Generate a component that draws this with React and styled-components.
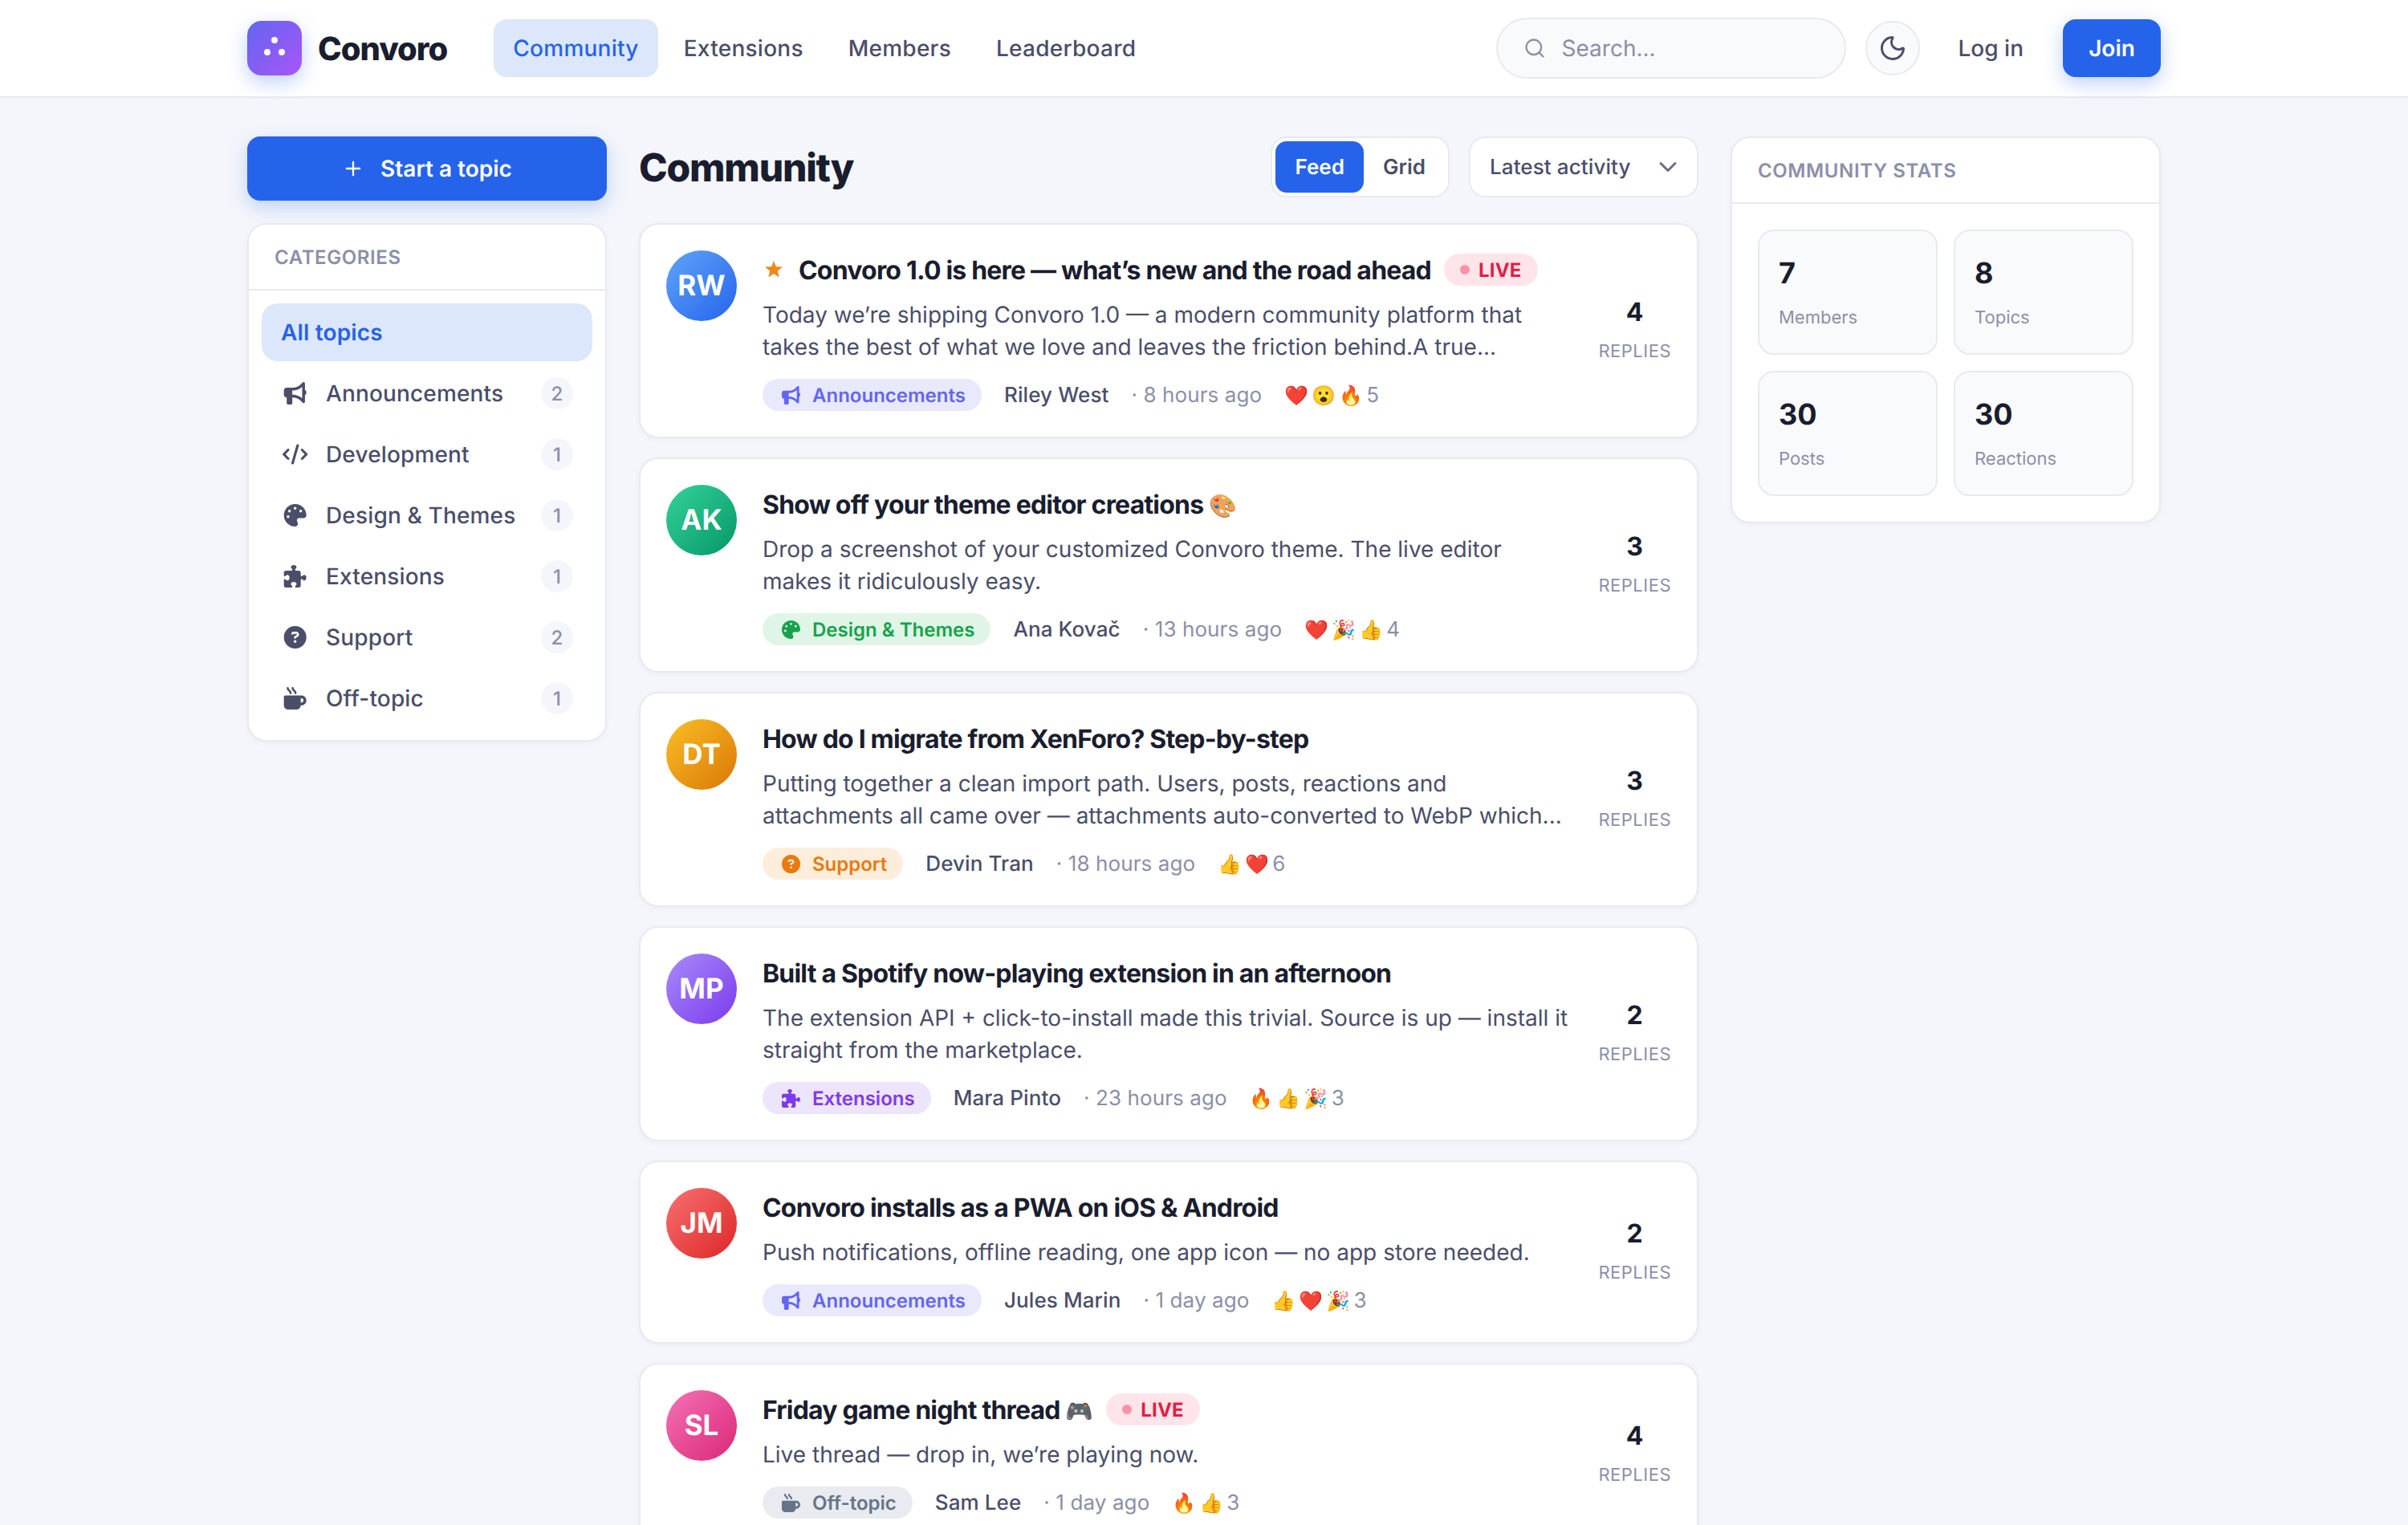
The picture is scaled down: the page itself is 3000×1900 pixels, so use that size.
import React from "react";
import styled, { createGlobalStyle } from "styled-components";
import { Search, Moon, Plus, ChevronDown } from "lucide-react";
import { FaBullhorn, FaCode, FaPalette, FaPuzzlePiece, FaCircleQuestion, FaMugHot } from "react-icons/fa6";

const colors = {
  bg: "#f4f6fb",
  white: "#ffffff",
  border: "#e8eaf1",
  ink: "#1a1d2e",
  body: "#4a4e69",
  muted: "#8b8fa8",
  blue: "#2563eb",
  blueSoft: "#dde7fb",
  tile: "#f9fafc",
};

const GlobalStyle = createGlobalStyle`
  * { box-sizing: border-box; }
  html, body { margin: 0; padding: 0; }
  body {
    background: ${colors.bg};
    color: ${colors.ink};
    font-family: Inter, "Noto Sans", sans-serif;
    text-rendering: geometricPrecision;
    height: 1900px;
    overflow: hidden;
  }
`;

const Header = styled.header`
  height: 122px;
  background: ${colors.white};
  border-bottom: 2px solid ${colors.border};
`;

const HeaderInner = styled.div`
  width: 2384px;
  height: 120px;
  margin: 0 auto;
  display: flex;
  align-items: center;
`;

const Logo = styled.div`
  width: 68px;
  height: 68px;
  border-radius: 18px;
  background: linear-gradient(135deg, #6366f1, #a855f7);
  box-shadow: 0 8px 24px rgba(37, 99, 235, 0.3);
  display: flex;
  align-items: center;
  justify-content: center;
`;

const Brand = styled.div`
  margin-left: 20px;
  margin-right: 58px;
  font-size: 40px;
  font-weight: 800;
  letter-spacing: -1px;
`;

const Nav = styled.nav`
  display: flex;
  gap: 8px;
`;

const NavLink = styled.a`
  height: 72px;
  padding: 0 24px;
  display: flex;
  align-items: center;
  border-radius: 16px;
  font-size: 28px;
  font-weight: 500;
  letter-spacing: 0.25px;
  color: ${(p) => (p.$active ? colors.blue : colors.body)};
  background: ${(p) => (p.$active ? colors.blueSoft : "transparent")};
`;

const HeaderRight = styled.div`
  margin-left: auto;
  display: flex;
  align-items: center;
`;

const SearchBox = styled.div`
  width: 436px;
  height: 76px;
  padding: 0 32px;
  display: flex;
  align-items: center;
  gap: 20px;
  border: 2px solid ${colors.border};
  border-radius: 38px;
  background: ${colors.tile};
  color: ${colors.muted};
  font-size: 28px;
`;

const ThemeButton = styled.button`
  width: 68px;
  height: 68px;
  margin-left: 24px;
  padding: 0;
  display: flex;
  align-items: center;
  justify-content: center;
  border: 2px solid ${colors.border};
  border-radius: 50%;
  background: ${colors.tile};
  color: ${colors.body};
`;

const LogIn = styled.a`
  margin-left: 48px;
  margin-right: 49px;
  font-size: 28px;
  font-weight: 500;
  color: ${colors.body};
`;

const JoinButton = styled.button`
  width: 122px;
  height: 72px;
  border: 0;
  border-radius: 16px;
  background: ${colors.blue};
  color: ${colors.white};
  font: 600 28px Inter, sans-serif;
  text-rendering: geometricPrecision;
  box-shadow: 0 8px 24px rgba(37, 99, 235, 0.3);
`;

const Layout = styled.div`
  width: 2384px;
  margin: 48px auto 0;
  display: grid;
  grid-template-columns: 448px 1320px 536px;
  gap: 40px;
  align-items: start;
`;

const Sidebar = styled.aside`
  display: flex;
  flex-direction: column;
  gap: 28px;
`;

const StartButton = styled.button`
  height: 80px;
  border: 0;
  border-radius: 16px;
  background: ${colors.blue};
  color: ${colors.white};
  font: 600 28px Inter, sans-serif;
  text-rendering: geometricPrecision;
  display: flex;
  align-items: center;
  justify-content: center;
  gap: 20px;
  box-shadow: 0 8px 24px rgba(37, 99, 235, 0.25);
`;

const Panel = styled.section`
  background: ${colors.white};
  border: 2px solid ${colors.border};
  border-radius: 24px;
  box-shadow: 0 2px 8px rgba(26, 29, 46, 0.04);
  overflow: hidden;
`;

const PanelTitle = styled.h3`
  margin: 0;
  height: 82px;
  padding: 0 32px;
  display: flex;
  align-items: center;
  border-bottom: 2px solid ${colors.border};
  font-size: 24px;
  font-weight: 600;
  letter-spacing: 0.6px;
  text-transform: uppercase;
  color: ${colors.muted};
`;

const CategoryList = styled.div`
  padding: 16px;
  display: flex;
  flex-direction: column;
  gap: 4px;
`;

const CategoryRow = styled.a`
  height: 72px;
  padding: 0 24px;
  display: flex;
  align-items: center;
  border-radius: 20px;
  font-size: 28px;
  letter-spacing: 0.15px;
  color: ${(p) => (p.$active ? colors.blue : colors.body)};
  background: ${(p) => (p.$active ? colors.blueSoft : "transparent")};
  font-weight: ${(p) => (p.$active ? 600 : 500)};
`;

const CategoryIcon = styled.span`
  width: 36px;
  margin-right: 20px;
  display: flex;
  justify-content: center;
  font-size: 28px;
  svg {
    height: 1em;
    width: 1.12em;
    flex: none;
  }
`;

const CountBadge = styled.span`
  margin-left: auto;
  min-width: 40px;
  height: 40px;
  padding: 0 12px;
  display: flex;
  align-items: center;
  justify-content: center;
  border-radius: 20px;
  background: ${colors.bg};
  color: ${colors.muted};
  font-size: 24px;
`;

const Main = styled.main`
  min-width: 0;
`;

const MainHead = styled.div`
  height: 76px;
  margin-bottom: 32px;
  display: flex;
  align-items: center;
`;

const PageTitle = styled.h1`
  margin: 0 auto 0 0;
  font-size: 48px;
  font-weight: 800;
  letter-spacing: -1.2px;
`;

const ViewToggle = styled.div`
  height: 76px;
  padding: 4px;
  display: flex;
  border: 2px solid ${colors.border};
  border-radius: 20px;
  background: ${colors.white};
`;

const ToggleButton = styled.button`
  padding: 0 24px;
  border: 0;
  border-radius: 14px;
  font: 600 26px Inter, sans-serif;
  text-rendering: geometricPrecision;
  background: ${(p) => (p.$active ? colors.blue : "transparent")};
  color: ${(p) => (p.$active ? colors.white : colors.body)};
`;

const SortSelect = styled.div`
  width: 286px;
  height: 76px;
  margin-left: 24px;
  padding: 0 18px 0 24px;
  display: flex;
  align-items: center;
  justify-content: space-between;
  border: 2px solid ${colors.border};
  border-radius: 20px;
  background: ${colors.white};
  color: ${colors.body};
  font-size: 26px;
  font-weight: 500;
  letter-spacing: 0.1px;
  svg {
    color: #6b6e82;
  }
`;

const TopicList = styled.div`
  display: flex;
  flex-direction: column;
  gap: 24px;
`;

const TopicCard = styled.article`
  padding: 32px;
  display: flex;
  align-items: stretch;
  gap: 32px;
  background: ${colors.white};
  border: 2px solid ${colors.border};
  border-radius: 24px;
  box-shadow: 0 2px 8px rgba(26, 29, 46, 0.04);
`;

const Avatar = styled.div`
  flex: none;
  width: 88px;
  height: 88px;
  display: flex;
  align-items: center;
  justify-content: center;
  border-radius: 50%;
  background: linear-gradient(135deg, ${(p) => p.$from}, ${(p) => p.$to});
  color: ${colors.white};
  font-size: 35px;
  font-weight: 700;
`;

const TopicBody = styled.div`
  flex: 1;
  min-width: 0;
`;

const TitleRow = styled.div`
  min-height: 48px;
  display: flex;
  align-items: center;
  gap: 16px;
`;

const PinStar = styled.svg`
  flex: none;
  width: 25px;
  height: 24px;
  margin-right: 4px;
  fill: #f08718;
`;

const TopicTitle = styled.h2`
  margin: 0;
  font-size: 32px;
  font-weight: 700;
  letter-spacing: -0.8px;
`;

const TitleEmoji = styled.span`
  font-size: 28px;
  letter-spacing: 0;
`;

const LiveBadge = styled.span`
  height: 40px;
  padding: 0 20px;
  display: flex;
  align-items: center;
  gap: 11px;
  border-radius: 20px;
  background: #ffe4e9;
  color: #e11d48;
  font-size: 24px;
  font-weight: 700;
  letter-spacing: 0.2px;
  &::before {
    content: "";
    width: 12px;
    height: 12px;
    border-radius: 50%;
    background: #fb92a8;
  }
`;

const Snippet = styled.p`
  margin: 12px 0 0;
  font-size: 28px;
  line-height: 40px;
  color: ${colors.body};
`;

const MetaRow = styled.div`
  margin-top: 20px;
  height: 40px;
  display: flex;
  align-items: center;
  font-size: 26px;
  letter-spacing: 0.1px;
`;

const CategoryTag = styled.span`
  height: 40px;
  padding: 0 20px;
  display: flex;
  align-items: center;
  gap: 12px;
  border-radius: 20px;
  background: ${(p) => p.$bg};
  color: ${(p) => p.$color};
  font-size: 24px;
  font-weight: 600;
  letter-spacing: 0;
`;

const TagIcon = styled.span`
  width: 30px;
  display: flex;
  justify-content: center;
  font-size: 23px;
`;

const Author = styled.span`
  margin-left: 28px;
  font-weight: 500;
  color: ${colors.body};
`;

const TimeAgo = styled.span`
  margin-left: 28px;
  color: ${colors.muted};
`;

const Reactions = styled.span`
  margin-left: 26px;
  display: flex;
  align-items: center;
  color: ${colors.muted};
`;

const Emoji = styled.span`
  width: 34px;
  display: flex;
  justify-content: center;
  font-size: 24px;
`;

const ReactionTotal = styled.span`
  margin-left: 2px;
`;

const Replies = styled.div`
  flex: none;
  padding-bottom: 4px;
  display: flex;
  flex-direction: column;
  align-items: center;
  justify-content: center;
  gap: 17px;
`;

const ReplyCount = styled.div`
  font-size: 32px;
  font-weight: 700;
`;

const ReplyLabel = styled.div`
  font-size: 22px;
  letter-spacing: 0.5px;
  color: ${colors.muted};
`;

const StatGrid = styled.div`
  padding: 32px;
  display: grid;
  grid-template-columns: 1fr 1fr;
  gap: 20px;
`;

const StatTile = styled.div`
  height: 156px;
  padding: 28px 24px;
  background: ${colors.tile};
  border: 2px solid ${colors.border};
  border-radius: 20px;
`;

const StatValue = styled.div`
  font-size: 36px;
  font-weight: 700;
  line-height: 48px;
`;

const StatLabel = styled.div`
  margin-top: 19px;
  font-size: 22px;
  color: ${colors.muted};
`;

const categories = [
  { name: "Announcements", count: 2, Icon: FaBullhorn },
  { name: "Development", count: 1, Icon: FaCode },
  { name: "Design & Themes", count: 1, Icon: FaPalette },
  { name: "Extensions", count: 1, Icon: FaPuzzlePiece },
  { name: "Support", count: 2, Icon: FaCircleQuestion },
  { name: "Off-topic", count: 1, Icon: FaMugHot },
];

const tags = {
  announcements: { name: "Announcements", Icon: FaBullhorn, bg: "#e8e9fd", color: "#6366f1" },
  design: { name: "Design & Themes", Icon: FaPalette, bg: "#e0f5e7", color: "#16a34a" },
  support: { name: "Support", Icon: FaCircleQuestion, bg: "#fdeedc", color: "#ea7a0c" },
  extensions: { name: "Extensions", Icon: FaPuzzlePiece, bg: "#ede4fd", color: "#7c3aed" },
  offtopic: { name: "Off-topic", Icon: FaMugHot, bg: "#e9ebf0", color: "#64748b" },
};

const topics = [
  {
    initials: "RW", from: "#60a5fa", to: "#2563eb", pinned: true, live: true,
    title: "Convoro 1.0 is here — what’s new and the road ahead",
    snippet: "Today we’re shipping Convoro 1.0 — a modern community platform that takes the best of what we love and leaves the friction behind.A true...",
    tag: "announcements", author: "Riley West", time: "8 hours ago", reactions: ["❤️", "😮", "🔥"], total: 5, replies: 4,
  },
  {
    initials: "AK", from: "#34d399", to: "#059669",
    title: "Show off your theme editor creations", emoji: "🎨",
    snippet: "Drop a screenshot of your customized Convoro theme. The live editor makes it ridiculously easy.",
    tag: "design", author: "Ana Kovač", time: "13 hours ago", reactions: ["❤️", "🎉", "👍"], total: 4, replies: 3,
  },
  {
    initials: "DT", from: "#fbbf24", to: "#d97706",
    title: "How do I migrate from XenForo? Step-by-step",
    snippet: "Putting together a clean import path. Users, posts, reactions and attachments all came over — attachments auto-converted to WebP which...",
    tag: "support", author: "Devin Tran", time: "18 hours ago", reactions: ["👍", "❤️"], total: 6, replies: 3,
  },
  {
    initials: "MP", from: "#a78bfa", to: "#7c3aed",
    title: "Built a Spotify now-playing extension in an afternoon",
    snippet: "The extension API + click-to-install made this trivial. Source is up — install it straight from the marketplace.",
    tag: "extensions", author: "Mara Pinto", time: "23 hours ago", reactions: ["🔥", "👍", "🎉"], total: 3, replies: 2,
  },
  {
    initials: "JM", from: "#f87171", to: "#dc2626",
    title: "Convoro installs as a PWA on iOS & Android",
    snippet: "Push notifications, offline reading, one app icon — no app store needed.",
    tag: "announcements", author: "Jules Marin", time: "1 day ago", reactions: ["👍", "❤️", "🎉"], total: 3, replies: 2,
  },
  {
    initials: "SL", from: "#f472b6", to: "#db2777", live: true,
    title: "Friday game night thread", emoji: "🎮",
    snippet: "Live thread — drop in, we’re playing now.",
    tag: "offtopic", author: "Sam Lee", time: "1 day ago", reactions: ["🔥", "👍"], total: 3, replies: 4,
  },
];

const stats = [
  { value: 7, label: "Members" },
  { value: 8, label: "Topics" },
  { value: 30, label: "Posts" },
  { value: 30, label: "Reactions" },
];

const Topic = ({ topic }) => {
  const tag = tags[topic.tag];
  return (
    <TopicCard>
      <Avatar $from={topic.from} $to={topic.to}>{topic.initials}</Avatar>
      <TopicBody>
        <TitleRow>
          {topic.pinned && (
            <PinStar viewBox="0 0 25 24">
              <polygon points="14,1 16.88,8.24 25.03,8.6 18.66,13.71 20.8,21.6 14,17.1 7.2,21.6 9.34,13.71 2.97,8.6 11.12,8.24" />
            </PinStar>
          )}
          <TopicTitle>
            {topic.title}
            {topic.emoji && <TitleEmoji> {topic.emoji}</TitleEmoji>}
          </TopicTitle>
          {topic.live && <LiveBadge>LIVE</LiveBadge>}
        </TitleRow>
        <Snippet>{topic.snippet}</Snippet>
        <MetaRow>
          <CategoryTag $bg={tag.bg} $color={tag.color}>
            <TagIcon><tag.Icon /></TagIcon>
            {tag.name}
          </CategoryTag>
          <Author>{topic.author}</Author>
          <TimeAgo>· {topic.time}</TimeAgo>
          <Reactions>
            {topic.reactions.map((r) => <Emoji key={r}>{r}</Emoji>)}
            <ReactionTotal>{topic.total}</ReactionTotal>
          </Reactions>
        </MetaRow>
      </TopicBody>
      <Replies>
        <ReplyCount>{topic.replies}</ReplyCount>
        <ReplyLabel>REPLIES</ReplyLabel>
      </Replies>
    </TopicCard>
  );
};

export default function App() {
  return (
    <>
      <GlobalStyle />
      <Header>
        <HeaderInner>
          <Logo>
            <svg width="32" height="32" viewBox="0 0 32 32" fill="#fff">
              <circle cx="16" cy="6" r="4" />
              <circle cx="7" cy="21" r="4" />
              <circle cx="25" cy="21" r="4" />
            </svg>
          </Logo>
          <Brand>Convoro</Brand>
          <Nav>
            <NavLink $active>Community</NavLink>
            <NavLink>Extensions</NavLink>
            <NavLink>Members</NavLink>
            <NavLink>Leaderboard</NavLink>
          </Nav>
          <HeaderRight>
            <SearchBox>
              <Search size={28} />
              Search...
            </SearchBox>
            <ThemeButton><Moon size={36} /></ThemeButton>
            <LogIn>Log in</LogIn>
            <JoinButton>Join</JoinButton>
          </HeaderRight>
        </HeaderInner>
      </Header>
      <Layout>
        <Sidebar>
          <StartButton><Plus size={28} />Start a topic</StartButton>
          <Panel>
            <PanelTitle>Categories</PanelTitle>
            <CategoryList>
              <CategoryRow $active>All topics</CategoryRow>
              {categories.map(({ name, count, Icon }) => (
                <CategoryRow key={name}>
                  <CategoryIcon><Icon /></CategoryIcon>
                  {name}
                  <CountBadge>{count}</CountBadge>
                </CategoryRow>
              ))}
            </CategoryList>
          </Panel>
        </Sidebar>
        <Main>
          <MainHead>
            <PageTitle>Community</PageTitle>
            <ViewToggle>
              <ToggleButton $active>Feed</ToggleButton>
              <ToggleButton>Grid</ToggleButton>
            </ViewToggle>
            <SortSelect>Latest activity<ChevronDown size={36} /></SortSelect>
          </MainHead>
          <TopicList>
            {topics.map((t) => <Topic key={t.initials} topic={t} />)}
          </TopicList>
        </Main>
        <Panel>
          <PanelTitle>Community stats</PanelTitle>
          <StatGrid>
            {stats.map((s) => (
              <StatTile key={s.label}>
                <StatValue>{s.value}</StatValue>
                <StatLabel>{s.label}</StatLabel>
              </StatTile>
            ))}
          </StatGrid>
        </Panel>
      </Layout>
    </>
  );
}
